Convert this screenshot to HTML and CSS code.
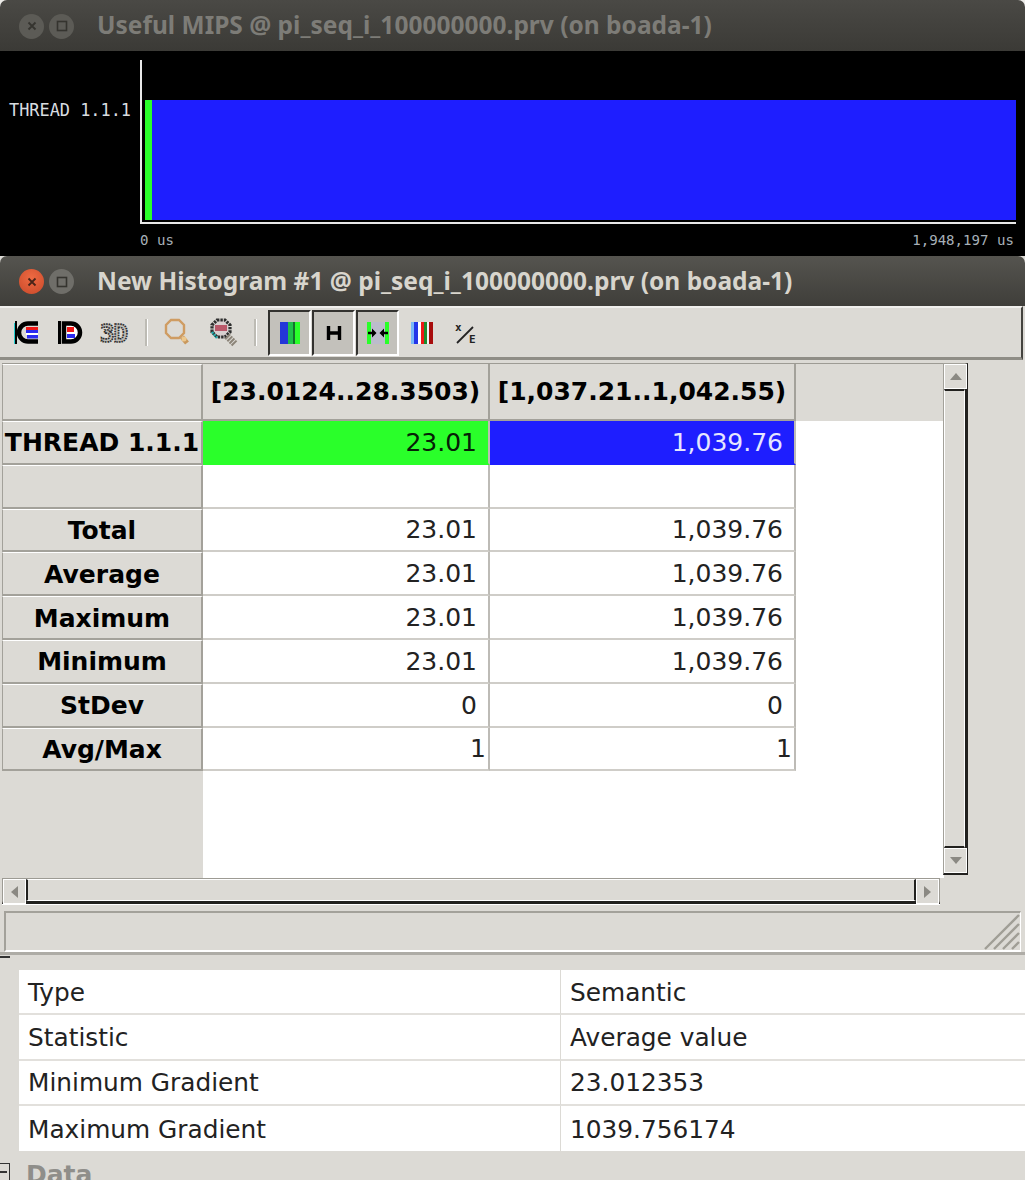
FILE: index.html
```html
<!DOCTYPE html>
<html lang="en">
<head>
<meta charset="utf-8">
<title>Histogram</title>
<link rel="stylesheet" href="styles.css">
</head>
<body>
<section class="timeline-window">
  <header class="titlebar inactive">
    <span class="win-btn"><svg width="12" height="12" viewBox="0 0 12 12"><path d="M2.5 2.5l7 7M9.5 2.5l-7 7" stroke="#35342f" stroke-width="1.8"/></svg></span>
    <span class="win-btn"><svg width="12" height="12" viewBox="0 0 12 12"><rect x="1.5" y="1.5" width="9" height="9" fill="none" stroke="#35342f" stroke-width="1.6"/></svg></span>
    <h1 class="title-text first-title">Useful MIPS @ pi_seq_i_100000000.prv (on boada-1)</h1>
  </header>
  <div class="timeline">
    <div class="thread-label">THREAD 1.1.1</div>
    <div class="plot-col">
      <div class="plot"><div class="bar-area"><span class="bar-green"></span><span class="bar-blue"></span></div></div>
      <div class="axis"><span>0 us</span><span>1,948,197 us</span></div>
    </div>
  </div>
</section>

<section class="hist-window">
  <header class="titlebar active">
    <span class="win-btn close"><svg width="12" height="12" viewBox="0 0 12 12"><path d="M2.5 2.5l7 7M9.5 2.5l-7 7" stroke="#4a2418" stroke-width="1.8"/></svg></span>
    <span class="win-btn max"><svg width="12" height="12" viewBox="0 0 12 12"><rect x="1.5" y="1.5" width="9" height="9" fill="none" stroke="#35342f" stroke-width="1.6"/></svg></span>
    <h2 class="title-text second-title">New Histogram #1 @ pi_seq_i_100000000.prv (on boada-1)</h2>
  </header>

  <div class="toolbar">
    <span class="tool"><svg width="28" height="28" viewBox="0 0 28 28"><rect x="2" y="2" width="2" height="23" fill="#000"/><rect x="1" y="4" width="1" height="21" fill="#2cc"/><path d="M25 4.5H15a9 9 0 0 0 0 18h10" fill="none" stroke="#000" stroke-width="4.5"/><rect x="13" y="8" width="12" height="5" fill="#f01818"/><rect x="13" y="11" width="12" height="3" fill="#2a2af0"/><rect x="13" y="14" width="12" height="2" fill="#fff"/><rect x="14" y="16" width="11" height="3.5" fill="#2a2af0"/></svg></span>
    <span class="tool"><svg width="28" height="28" viewBox="0 0 28 28"><rect x="1" y="2" width="3" height="23" fill="#000"/><path d="M7 4.5h7a9 9 0 0 1 0 18H7z" fill="#fff" stroke="#000" stroke-width="4.5"/><rect x="10" y="8" width="7" height="5" fill="#f01818"/><rect x="10" y="15" width="8" height="4" fill="#2a2af0"/></svg></span>
    <span class="tool"><svg width="32" height="28" viewBox="0 0 32 28"><text x="1" y="23" class="icon-3d">3D</text></svg></span>
    <span class="tool-sep"></span>
    <span class="tool glass"><svg width="30" height="30" viewBox="0 0 30 30"><path d="M7 2h8l5 5v8l-5 5H7l-5-5V7z" fill="none" stroke="#cf9c62" stroke-width="2.4"/><path d="M18 19l5 6" stroke="#c9985c" stroke-width="5"/><circle cx="20" cy="21" r="2.5" fill="#ecc88e"/></svg></span>
    <span class="tool glass2"><svg width="30" height="30" viewBox="0 0 30 30"><path d="M8 2h8l5 5v7l-5 5H8l-5-5V7z" fill="#d8d0d0" stroke="#2e2e2e" stroke-width="3.2" stroke-dasharray="2.4 1"/><path d="M6 7h12v6H6z" fill="#b03048" opacity=".75"/><path d="M3 14l5 6" stroke="#2aa" stroke-width="2.5" stroke-dasharray="2 1"/><path d="M18 18l8 8" stroke="#8c8478" stroke-width="7" stroke-dasharray="2 1"/></svg></span>
    <span class="tool-sep"></span>
    <span class="tool pressed"><svg width="20" height="22" viewBox="0 0 20 22"><rect width="8" height="22" fill="#2436d8"/><rect x="8" width="5" height="22" fill="#1fc04a"/><rect x="13" width="2" height="22" fill="#14702c"/><rect x="15" width="5" height="22" fill="#2aff2a"/></svg></span>
    <span class="tool pressed"><svg width="16" height="16" viewBox="0 0 16 16"><path d="M2.5 1v14M13.5 1v14M2.5 8h11" fill="none" stroke="#000" stroke-width="3.4"/></svg></span>
    <span class="tool pressed tinted"><svg width="22" height="22" viewBox="0 0 22 22"><rect x="0" width="4" height="22" fill="#2aff2a"/><rect x="18" width="4" height="22" fill="#2aff2a"/><path d="M1 11h5M15 11h6" stroke="#000" stroke-width="2.4"/><path d="M9.5 11L5 6.5v9zM12.5 11L17 6.5v9z" fill="#000"/></svg></span>
    <span class="tool"><svg width="22" height="22" viewBox="0 0 22 22"><rect x="0" width="3" height="22" fill="#7ab8f8"/><rect x="3" width="4" height="22" fill="#2436e8"/><rect x="7" width="3" height="22" fill="#fff"/><rect x="10" width="3" height="22" fill="#ee1818"/><rect x="13" width="3" height="22" fill="#1c8c2c"/><rect x="16" width="2" height="22" fill="#f4f4f4"/><rect x="18" width="4" height="22" fill="#a80c0c"/></svg></span>
    <span class="tool"><svg width="24" height="24" viewBox="0 0 24 24"><text x="1" y="10" class="icon-small">x</text><path d="M3 22L19 6" stroke="#222" stroke-width="1.8"/><text x="15" y="22" class="icon-small">E</text></svg></span>
  </div>

  <div class="sheet-row">
    <div class="sheet-col">
      <div class="sheet">
        <div class="cell head"></div>
        <div class="cell col-head">[23.0124..28.3503)</div>
        <div class="cell col-head">[1,037.21..1,042.55)</div>
        <div class="fill-gray"></div>

        <div class="cell head">THREAD 1.1.1</div>
        <div class="cell green">23.01</div>
        <div class="cell blue">1,039.76</div>
        <div class="fill-white"></div>

        <div class="cell head"></div>
        <div class="cell num"></div>
        <div class="cell num"></div>
        <div class="fill-white"></div>

        <div class="cell head">Total</div>
        <div class="cell num">23.01</div>
        <div class="cell num">1,039.76</div>
        <div class="fill-white"></div>

        <div class="cell head">Average</div>
        <div class="cell num">23.01</div>
        <div class="cell num">1,039.76</div>
        <div class="fill-white"></div>

        <div class="cell head">Maximum</div>
        <div class="cell num">23.01</div>
        <div class="cell num">1,039.76</div>
        <div class="fill-white"></div>

        <div class="cell head">Minimum</div>
        <div class="cell num">23.01</div>
        <div class="cell num">1,039.76</div>
        <div class="fill-white"></div>

        <div class="cell head">StDev</div>
        <div class="cell num">0</div>
        <div class="cell num">0</div>
        <div class="fill-white"></div>

        <div class="cell head">Avg/Max</div>
        <div class="cell num tight">1</div>
        <div class="cell num tight">1</div>
        <div class="fill-white"></div>

        <div class="fill-gray"></div>
        <div class="fill-white bottom"></div>
      </div>
      <div class="hscroll">
        <span class="sb-btn"><i class="arrow left"></i></span>
        <span class="sb-track"></span>
        <span class="sb-btn"><i class="arrow right"></i></span>
      </div>
    </div>
    <div class="vscroll">
      <span class="sb-btn"><i class="arrow up"></i></span>
      <span class="sb-track"></span>
      <span class="sb-btn"><i class="arrow down"></i></span>
    </div>
  </div>

  <div class="statusbar">
    <svg class="grip" width="36" height="36" viewBox="0 0 36 36"><path d="M1 35L35 1M10 35L35 10M19 35L35 19M28 35L35 28" stroke="#a09e96" stroke-width="2.4"/></svg>
  </div>
</section>

<section class="props">
  <div class="props-grid">
    <div class="prop-cell">Type</div><div class="prop-cell">Semantic</div>
    <div class="prop-cell">Statistic</div><div class="prop-cell">Average value</div>
    <div class="prop-cell">Minimum Gradient</div><div class="prop-cell">23.012353</div>
    <div class="prop-cell">Maximum Gradient</div><div class="prop-cell">1039.756174</div>
  </div>
  <div class="data-row"><span class="expander"></span><span class="data-label">Data</span></div>
</section>
</body>
</html>
```

FILE: styles.css
```css
* { box-sizing: border-box; }
html, body { margin: 0; padding: 0; }
body {
  width: 1025px;
  height: 1180px;
  overflow: hidden;
  background: #dcdad5;
  display: flex;
  flex-direction: column;
  font-family: "DejaVu Sans", sans-serif;
  color: #000;
}

/* Title bars */
.titlebar {
  display: flex;
  align-items: center;
  gap: 5px;
  height: 51px;
  padding: 1px 0 0 19px;
  border-radius: 7px 7px 0 0;
  background: linear-gradient(#4a4945, #3b3a36);
}
.win-btn {
  width: 25px;
  height: 25px;
  border-radius: 50%;
  background: #5c5b56;
  display: flex;
  align-items: center;
  justify-content: center;
  flex: none;
}
.win-btn.close { background: radial-gradient(circle at 50% 35%, #ee6a42, #c9492a); }
.win-btn.max { background: #6f6e69; }
.title-text {
  margin: -3px 0 0 18px;
  font-family: "Noto Sans", sans-serif;
  font-size: 24.5px;
  font-weight: 700;
  white-space: nowrap;
}
.first-title { color: #7d7c77; }
.second-title { color: #d8d5cd; }

/* Timeline window */
.timeline-window { background: #ecebe8; height: 256px; flex: none; }
.timeline {
  height: 205px;
  background: #000;
  display: flex;
  padding-top: 9px;
  font-family: "DejaVu Sans Mono", monospace;
  font-size: 16.9px;
}
.thread-label {
  width: 140px;
  padding: 40px 0 0 9px;
  line-height: 20px;
  color: #d9dde0;
  white-space: nowrap;
}
.plot-col { flex: 1; display: flex; flex-direction: column; padding-right: 9px; }
.plot {
  height: 164px;
  border-left: 2px solid #e8e8e8;
  border-bottom: 2px solid #e8e8e8;
  padding: 40px 0 2px 3px;
}
.bar-area { height: 100%; display: flex; }
.bar-green { width: 7px; background: #2aff2a; }
.bar-blue { flex: 1; background: #1e1eff; }
.axis {
  display: flex;
  justify-content: space-between;
  padding: 6px 2px 0 0;
  font-size: 14.1px;
  line-height: 20px;
  color: #a7b0b8;
}

/* Histogram window */
.hist-window { height: 696px; flex: none; display: flex; flex-direction: column; }
.hist-window .titlebar { height: 50px; background: linear-gradient(#55544f, #3f3e3a); }
.toolbar {
  height: 54px;
  flex: none;
  display: flex;
  align-items: center;
  margin-right: 2px;
  padding: 0 3px 0 5px;
  background: #dcdad5;
  border-top: 2px solid #f0efec;
  border-bottom: 3px solid #8f8d86;
  border-right: 2px solid #44433f;
}
.tool {
  width: 44px;
  height: 44px;
  flex: none;
  margin-top: 1px;
  display: flex;
  align-items: center;
  justify-content: center;
}
.glass, .glass2 { width: 45px; }
.tool-sep {
  width: 3px;
  height: 27px;
  margin: 0 8px;
  background: #bdbbb4;
  border-right: 1px solid #fff;
  flex: none;
}
.tool-sep + .pressed { margin-left: 3px; }
.tool.pressed {
  width: 43px;
  height: 46px;
  margin-right: 1px;
  background: #c3c1bb;
  border: 2px solid #fff;
  border-top: 2px solid #33322f;
  border-left: 2px solid #33322f;
}
.tool.tinted svg { background: #bcbccc; }
.icon-3d {
  font: 700 24px "DejaVu Sans Mono", monospace;
  fill: #bdbbb6;
  stroke: #2c2c2c;
  stroke-width: 1.7px;
  stroke-dasharray: 1.6 .9;
  letter-spacing: -1px;
}
.icon-small { font: 700 11px "DejaVu Sans Mono", monospace; fill: #222; }

.sheet-row { display: flex; height: 551px; flex: none; padding: 3px 0 0 2px; }
.sheet-col { width: 942px; flex: none; display: flex; flex-direction: column; }
.sheet {
  height: 515px;
  flex: none;
  display: grid;
  grid-template-columns: 201px 287px 306px 1fr;
  grid-template-rows: 57px repeat(8, 43.8px) 1fr;
  font-size: 25px;
  border-top: 1px solid #9d9b94;
}
.cell {
  display: flex;
  align-items: center;
  white-space: nowrap;
  border-right: 2px solid #bdbbb6;
  border-bottom: 2px solid #cfcdc8;
  padding: 1px 6px 0;
  overflow: hidden;
}
.head {
  justify-content: center;
  font-weight: 700;
  background: #dcdad5;
  border-left: 1px solid #a3a19a;
  border-top: 1px solid #fff;
  border-right: 2px solid #a3a19a;
  border-bottom: 2px solid #a3a19a;
  padding: 1px 0 0;
}
.col-head {
  justify-content: center;
  font-weight: 700;
  background: #dcdad5;
  border-right: 2px solid #a3a19a;
  border-bottom: 2px solid #a3a19a;
  padding: 0;
}
.num, .green, .blue { justify-content: flex-end; background: #fff; color: #222; }
.green { background: #2aff2a; color: #062006; padding-right: 11px; border-bottom-color: #2aff2a; }
.blue { background: #1e1eff; color: #e6e6ff; padding-right: 11px; border-bottom-color: #1e1eff; }
.cell.num { padding-right: 11px; }
.cell.num.tight { padding-right: 2px; }
.fill-gray { background: #dcdad5; }
.fill-white { background: #fff; }
.fill-white.bottom { grid-column: 2 / -1; }

/* Scrollbars */
.hscroll {
  height: 26px;
  width: 938px;
  flex: none;
  display: flex;
  background: #dcdad5;
  border: 1px solid #9d9b94;
  border-bottom: 3px solid #22211f;
  box-shadow: 0 1px 0 #fff;
}
.vscroll {
  width: 25px;
  height: 512px;
  flex: none;
  display: flex;
  flex-direction: column;
  background: #dcdad5;
  border: 1px solid #a3a19a;
  border-right: 3px solid #22211f;
  border-bottom: 2px solid #22211f;
  margin-left: -1px;
}
.sb-btn {
  width: 23px;
  height: 25px;
  flex: none;
  display: flex;
  align-items: center;
  justify-content: center;
  background: #dcdad5;
  border: 1px solid #fff;
}
.sb-track { flex: 1; border: 1px solid #fff; }
.vscroll .sb-track { border-top: 2px solid #22211f; border-bottom: 2px solid #22211f; }
.hscroll .sb-track { border-left: 2px solid #22211f; border-right: 2px solid #22211f; }
.arrow { display: block; width: 0; height: 0; border: 5px solid transparent; }
.arrow.up { border-bottom: 7px solid #8b8983; border-top: 0; border-left-width: 6px; border-right-width: 6px; }
.arrow.down { border-top: 7px solid #8b8983; border-bottom: 0; border-left-width: 6px; border-right-width: 6px; }
.arrow.left { border-right: 7px solid #8b8983; border-left: 0; border-top-width: 6px; border-bottom-width: 6px; }
.arrow.right { border-left: 7px solid #8b8983; border-right: 0; border-top-width: 6px; border-bottom-width: 6px; }

.statusbar {
  height: 41px;
  flex: none;
  margin: 0 4px 0 4px;
  position: relative;
  border-top: 2px solid #a3a19a;
  border-left: 2px solid #a3a19a;
  border-bottom: 2px solid #fff;
  border-right: 1px solid #fff;
}
.grip { position: absolute; right: 0; bottom: 0; }

/* Properties */
.props { flex: 1; position: relative; padding-top: 15px; border-top: 3px solid #aeaca6; }
.props::before {
  content: "";
  position: absolute;
  left: 0;
  top: 1px;
  width: 10px;
  height: 2px;
  background: #333;
}
.props-grid {
  margin-left: 19px;
  display: grid;
  grid-template-columns: 542px 1fr;
  grid-auto-rows: 45.3px;
}
.prop-cell {
  background: #fff;
  display: flex;
  align-items: center;
  padding: 1px 9px 0;
  font-size: 24.8px;
  color: #222;
  border-bottom: 2px solid #e2e0dc;
}
.prop-cell:nth-child(odd) { border-right: 1px solid #dcdad5; }
.prop-cell:nth-last-child(-n+2) { border-bottom: 0; }
.data-row { display: flex; align-items: flex-start; height: 29px; }
.expander {
  position: relative;
  width: 10px;
  height: 17px;
  margin-top: 12px;
  border: 1px solid #333;
  border-left: 0;
  border-bottom: 0;
  flex: none;
}
.expander::after {
  content: "";
  position: absolute;
  left: 0;
  top: 7px;
  width: 7px;
  height: 2px;
  background: #333;
}
.data-label { margin: 9px 0 0 16px; font-size: 25px; font-weight: 700; color: #8f8e8a; }
```
